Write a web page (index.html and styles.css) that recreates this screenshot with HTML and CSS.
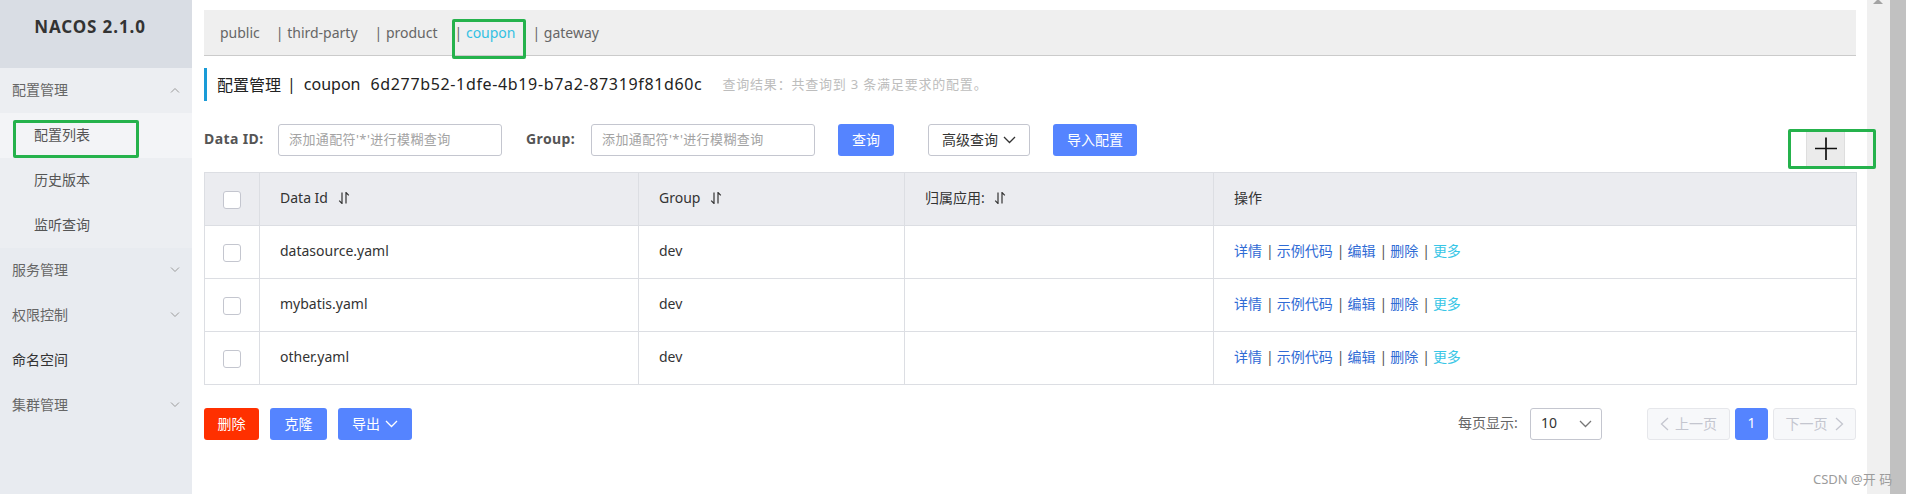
FILE: index.html
```html
<!DOCTYPE html>
<html lang="zh-CN">
<head>
<meta charset="utf-8">
<title>Nacos 配置管理</title>
<link rel="stylesheet" href="styles.css">
</head>
<body>
<div class="app">
  <aside class="sidebar">
    <div class="logo">NACOS 2.1.0</div>
    <ul class="menu">
      <li class="menu-item open"><span>配置管理</span><svg class="chev" width="10" height="6" viewBox="0 0 10 6"><polyline points="1,5.5 5,1.5 9,5.5" fill="none" stroke="#9a9a9a" stroke-width="1"/></svg></li>
      <li class="sub-item selected"><span>配置列表</span><span class="mark mark-side"></span></li>
      <li class="sub-item"><span>历史版本</span></li>
      <li class="sub-item"><span>监听查询</span></li>
      <li class="menu-item"><span>服务管理</span><svg class="chev" width="10" height="6" viewBox="0 0 10 6"><polyline points="1,0.5 5,4.5 9,0.5" fill="none" stroke="#9a9a9a" stroke-width="1"/></svg></li>
      <li class="menu-item"><span>权限控制</span><svg class="chev" width="10" height="6" viewBox="0 0 10 6"><polyline points="1,0.5 5,4.5 9,0.5" fill="none" stroke="#9a9a9a" stroke-width="1"/></svg></li>
      <li class="menu-item leaf"><span>命名空间</span></li>
      <li class="menu-item"><span>集群管理</span><svg class="chev" width="10" height="6" viewBox="0 0 10 6"><polyline points="1,0.5 5,4.5 9,0.5" fill="none" stroke="#9a9a9a" stroke-width="1"/></svg></li>
    </ul>
  </aside>

  <main class="content">
    <div class="ns-bar">
      <span class="ns-item ns-first">public</span>
      <span class="ns-item">| third-party</span>
      <span class="ns-item">| product</span>
      <span class="ns-item active">| <span class="ns-name">coupon</span><span class="mark mark-ns"></span></span>
      <span class="ns-item">| gateway</span>
    </div>

    <div class="page-title">
      <span class="t-main">配置管理</span><span class="t-sep">|</span><span class="t-ns">coupon</span><span class="t-id">6d277b52-1dfe-4b19-b7a2-87319f81d60c</span>
      <span class="t-info">查询结果：共查询到 3 条满足要求的配置。</span>
    </div>

    <div class="filter">
      <label class="f-label f-label-id">Data ID:</label>
      <div class="f-input">添加通配符'*'进行模糊查询</div>
      <label class="f-label f-label-group">Group:</label>
      <div class="f-input">添加通配符'*'进行模糊查询</div>
      <button class="btn btn-primary btn-query">查询</button>
      <button class="btn btn-normal btn-adv">高级查询<svg class="dd" width="13" height="8" viewBox="0 0 13 8"><polyline points="1,1 6.5,6.5 12,1" fill="none" stroke="currentColor" stroke-width="1.3"/></svg></button>
      <button class="btn btn-primary btn-import">导入配置</button>
      <div class="plus-btn">
        <svg width="24" height="24" viewBox="0 0 24 24"><path d="M1 11.5H23M12 0.5V23" stroke="#111" stroke-width="1.7" fill="none"/></svg>
        <span class="mark mark-plus"></span>
      </div>
    </div>

    <table class="cfg-table">
      <colgroup>
        <col class="c-check"><col class="c-id"><col class="c-group"><col class="c-app"><col class="c-op">
      </colgroup>
      <thead>
        <tr>
          <th class="cell-check"><span class="checkbox"></span></th>
          <th>Data Id <svg class="sort" width="12" height="12" viewBox="0 0 12 12"><path d="M4 0.5V11.5L1.2 8.7M8 11.5V0.5L10.8 3.3" fill="none" stroke="#333" stroke-width="1.2"/></svg></th>
          <th>Group <svg class="sort" width="12" height="12" viewBox="0 0 12 12"><path d="M4 0.5V11.5L1.2 8.7M8 11.5V0.5L10.8 3.3" fill="none" stroke="#333" stroke-width="1.2"/></svg></th>
          <th>归属应用: <svg class="sort" width="12" height="12" viewBox="0 0 12 12"><path d="M4 0.5V11.5L1.2 8.7M8 11.5V0.5L10.8 3.3" fill="none" stroke="#333" stroke-width="1.2"/></svg></th>
          <th>操作</th>
        </tr>
      </thead>
      <tbody>
        <tr>
          <td class="cell-check"><span class="checkbox"></span></td>
          <td>datasource.yaml</td>
          <td>dev</td>
          <td></td>
          <td class="ops"><a>详情</a><span class="sep">|</span><a>示例代码</a><span class="sep">|</span><a>编辑</a><span class="sep">|</span><a>删除</a><span class="sep">|</span><a class="more">更多</a></td>
        </tr>
        <tr>
          <td class="cell-check"><span class="checkbox"></span></td>
          <td>mybatis.yaml</td>
          <td>dev</td>
          <td></td>
          <td class="ops"><a>详情</a><span class="sep">|</span><a>示例代码</a><span class="sep">|</span><a>编辑</a><span class="sep">|</span><a>删除</a><span class="sep">|</span><a class="more">更多</a></td>
        </tr>
        <tr>
          <td class="cell-check"><span class="checkbox"></span></td>
          <td>other.yaml</td>
          <td>dev</td>
          <td></td>
          <td class="ops"><a>详情</a><span class="sep">|</span><a>示例代码</a><span class="sep">|</span><a>编辑</a><span class="sep">|</span><a>删除</a><span class="sep">|</span><a class="more">更多</a></td>
        </tr>
      </tbody>
    </table>

    <div class="footer">
      <button class="btn btn-danger btn-del">删除</button>
      <button class="btn btn-primary btn-clone">克隆</button>
      <button class="btn btn-primary btn-export">导出<svg class="dd" width="13" height="8" viewBox="0 0 13 8"><polyline points="1,1 6.5,6.5 12,1" fill="none" stroke="currentColor" stroke-width="1.3"/></svg></button>
      <div class="pager">
        <span class="pg-label">每页显示:</span>
        <div class="pg-select"><span>10</span><svg width="13" height="8" viewBox="0 0 13 8"><polyline points="1,1 6.5,6.5 12,1" fill="none" stroke="#777" stroke-width="1.3"/></svg></div>
        <button class="pg-btn pg-prev"><svg width="9" height="14" viewBox="0 0 9 14"><polyline points="8,1 1.5,7 8,13" fill="none" stroke="currentColor" stroke-width="1.3"/></svg>上一页</button>
        <button class="pg-btn pg-cur">1</button>
        <button class="pg-btn pg-next">下一页<svg width="9" height="14" viewBox="0 0 9 14"><polyline points="1,1 7.5,7 1,13" fill="none" stroke="currentColor" stroke-width="1.3"/></svg></button>
      </div>
    </div>
  </main>

  <div class="scroll-track"><span class="scroll-arrow"></span></div>
  <div class="scroll-thumb"></div>
</div>
<div class="watermark">CSDN @开 码</div>
</body>
</html>
```

FILE: styles.css
```css
* { box-sizing: border-box; }
html, body { margin: 0; padding: 0; }
body {
  font-family: "Noto Sans", "Noto Sans CJK SC", sans-serif;
  font-size: 14px;
  color: #333;
  background: #fff;
  width: 1906px;
  height: 494px;
  overflow: hidden;
  position: relative;
}
button { font-family: inherit; cursor: pointer; }

.app { display: flex; height: 494px; }

/* sidebar */
.sidebar { width: 192px; flex: none; background: #e8ebf0; }
.logo {
  height: 68px;
  background: #d9dde4;
  font-weight: 700;
  font-size: 17px;
  color: #333;
  text-align: center;
  padding: 15px 12px 0 0;
  line-height: 24px;
  letter-spacing: 0.9px;
}
.menu { list-style: none; margin: 0; padding: 0; }
.menu li {
  position: relative;
  height: 45px;
  display: flex;
  align-items: center;
  justify-content: space-between;
  padding: 0 12px 4px 12px;
  font-size: 14px;
  color: #666;
}
.menu .open { background: #eceef2; }
.menu .sub-item { padding-left: 34px; color: #555; background: #eceef2; }
.menu .sub-item.selected { background: #f3f4f7; }
.menu .leaf { color: #333; }
.chev { flex: none; margin-top: 3px; }

/* green annotation boxes */
.mark {
  position: absolute;
  border: 3px solid #25b24c;
  border-radius: 2px;
  pointer-events: none;
  z-index: 5;
}
.mark-side { left: 13px; top: 7px; width: 126px; height: 38px; }
.mark-ns { left: -3px; top: 9px; width: 74px; height: 40px; }
.mark-plus { left: -19px; top: -3px; width: 88px; height: 40px; }

/* main content */
.content { flex: 1; min-width: 0; padding: 10px 11px 0 12px; }

.ns-bar {
  height: 46px;
  background: #efefef;
  border-bottom: 1px solid #cbcbcb;
  padding-left: 16px;
  display: flex;
  font-size: 14px;
  color: #666;
}
.ns-item { position: relative; line-height: 45px; margin-right: 17px; white-space: pre; }
.ns-item.ns-first { margin-right: 16px; }
.ns-item.active .ns-name { color: #33c1e3; }

.page-title {
  margin-top: 12px;
  height: 33px;
  border-left: 3px solid #1a9bd7;
  padding-left: 10px;
  padding-bottom: 2px;
  display: flex;
  align-items: center;
  font-size: 16px;
  color: #222;
  white-space: nowrap;
}
.t-sep { margin: 0 6px; }
.t-ns { margin-left: 2px; }
.t-id { margin-left: 10px; letter-spacing: 0.65px; }
.t-info { margin-left: 20px; font-size: 13px; color: #bdbdbd; letter-spacing: 0.8px; }

.filter { margin-top: 23px; display: flex; align-items: flex-start; }
.f-label { font-weight: 700; color: #555; line-height: 30px; font-size: 14px; white-space: nowrap; letter-spacing: 0.4px; }
.f-label-id { width: 74px; }
.f-label-group { width: 65px; margin-left: 24px; }
.f-input {
  width: 224px;
  height: 32px;
  border: 1px solid #c4c6cf;
  border-radius: 3px;
  padding: 0 10px;
  font-size: 13px;
  color: #a3a3a3;
  line-height: 28px;
  white-space: nowrap;
  letter-spacing: 0.4px;
}

.btn {
  height: 32px;
  border-radius: 3px;
  border: 1px solid transparent;
  padding: 0 0 3px 0;
  font-size: 14px;
  display: inline-flex;
  align-items: center;
  justify-content: center;
  white-space: nowrap;
}
.btn-primary { background: #5584ff; color: #fff; }
.btn-normal { background: #fff; border-color: #c4c6cf; color: #333; }
.btn-danger { background: #ff3000; color: #fff; }
.btn .dd { margin-left: 5px; margin-top: 3px; }

.btn-query { width: 56px; margin-left: 23px; }
.btn-adv { width: 102px; margin-left: 34px; }
.btn-import { width: 84px; margin-left: 23px; }

.plus-btn {
  position: relative;
  margin-left: auto;
  margin-right: 11px;
  margin-top: 8px;
  width: 39px;
  height: 37px;
  background: #ebebeb;
  border-left: 1px solid #dedede;
  border-right: 1px solid #dedede;
  display: flex;
  align-items: center;
  justify-content: center;
}
.plus-btn svg { margin-top: -3px; }

/* table */
.cfg-table {
  margin-top: 3px;
  width: 1652px;
  border-collapse: collapse;
  table-layout: fixed;
  border: 1px solid #dcdee3;
  font-size: 14px;
}
.c-check { width: 55px; }
.c-id { width: 379px; }
.c-group { width: 266px; }
.c-app { width: 309px; }
.c-op { width: 643px; }
.cfg-table th, .cfg-table td {
  border: 1px solid #dcdee3;
  height: 53px;
  padding: 0 20px 4px 20px;
  text-align: left;
  font-weight: 400;
  color: #333;
  white-space: nowrap;
}
.cfg-table th { background: #ebecf0; }
.cfg-table .cell-check { padding: 0; text-align: center; }
.checkbox {
  display: inline-block;
  width: 18px;
  height: 18px;
  border: 1px solid #c4c6cf;
  border-radius: 3px;
  background: #fff;
  vertical-align: middle;
}
.sort { vertical-align: -1px; margin-left: 6px; }

.ops a { color: #2f6bd5; margin-right: 4px; }
.ops .sep { color: #555; margin-right: 3px; }
.ops a.more { color: #38c6e6; }

/* footer */
.footer { margin-top: 23px; display: flex; align-items: center; }
.btn-del { width: 55px; }
.btn-clone { width: 57px; margin-left: 11px; }
.btn-export { width: 74px; margin-left: 11px; }

.pager { margin-left: auto; display: flex; align-items: center; }
.pg-label { color: #666; font-size: 14px; width: 72px; padding-bottom: 4px; }
.pg-select {
  width: 72px;
  height: 32px;
  border: 1px solid #c4c6cf;
  border-radius: 3px;
  display: flex;
  align-items: center;
  justify-content: space-between;
  padding: 0 9px 3px 10px;
  color: #333;
  font-size: 14px;
}
.pg-select svg { margin-top: 3px; }
.pg-btn {
  height: 32px;
  border-radius: 3px;
  border: 1px solid #e6e7eb;
  background: #f7f8fa;
  color: #c4c6cf;
  font-size: 14px;
  display: inline-flex;
  align-items: center;
  justify-content: center;
  padding: 0 0 3px 0;
}
.pg-btn svg { margin-top: 3px; }
.pg-prev { width: 83px; margin-left: 45px; }
.pg-prev svg { margin-right: 6px; }
.pg-next { width: 83px; margin-left: 5px; }
.pg-next svg { margin-left: 7px; }
.pg-cur { width: 33px; margin-left: 5px; background: #5584ff; border-color: #5584ff; color: #fff; }

/* scrollbars */
.scroll-track { width: 23px; flex: none; background: #f0f0f0; position: relative; }
.scroll-arrow {
  position: absolute;
  left: 6px;
  top: -1px;
  width: 0;
  height: 0;
  border-left: 5px solid transparent;
  border-right: 5px solid transparent;
  border-bottom: 5px solid #a3a3a3;
}
.scroll-thumb { width: 16px; flex: none; background: #c1c1c1; }

.watermark {
  position: absolute;
  left: 1813px;
  top: 469px;
  font-size: 13px;
  color: #9c9c9c;
  white-space: nowrap;
  z-index: 6;
}
```
